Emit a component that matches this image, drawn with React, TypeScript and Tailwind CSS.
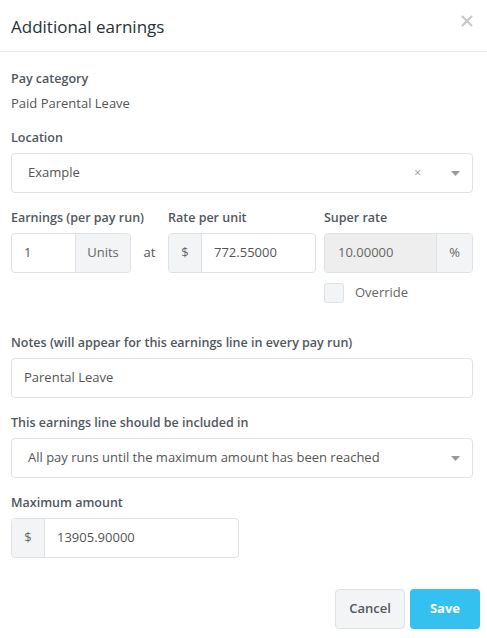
import { X } from "lucide-react";

const font = { fontFamily: '"Open Sans", "Liberation Sans", sans-serif' };

const Caret = () => (
  <svg width="9" height="5" viewBox="0 0 9 5" className="text-[#999]">
    <path d="M0 0h9L4.5 5z" fill="currentColor" />
  </svg>
);

const Label = ({ children }: { children: React.ReactNode }) => (
  <div className="text-[12.5px] font-semibold text-[#51575e] leading-[18px] mb-[6px] whitespace-nowrap">{children}</div>
);

export default function App() {
  return (
    <div className="w-[487px] h-[638px] bg-white text-[#555]" style={font}>
      {/* header */}
      <div className="flex items-center justify-between h-[52px] pl-[11px] pr-[11px] border-b border-[#e5eaee]">
        <h2 className="text-[17px] text-[#263238] leading-none pt-[2px]">Additional earnings</h2>
        <X className="w-[18px] h-[18px] text-[#c8c8c8] -mt-[9px]" strokeWidth={2.75} />
      </div>

      <div className="px-[11px] pt-[18px] w-[484px]">
        <Label>Pay category</Label>
        <div className="text-[13px] leading-[18px] text-[#555] -mt-[0px]">Paid Parental Leave</div>

        <div className="mt-[17px]">
          <Label>Location</Label>
          <div className="h-[40px] border border-[#dde2e6] rounded-[4px] flex items-center pl-[16px] pr-[12px] text-[13px]">
            <span className="flex-1">Example</span>
            <span className="text-[#999] text-[12px] mr-[30px]">×</span>
            <Caret />
          </div>
        </div>

        {/* earnings row */}
        <div className="mt-[16px] flex">
          <div className="w-[157px] shrink-0">
            <Label>Earnings (per pay run)</Label>
            <div className="flex items-center">
              <div className="flex h-[40px] w-[120px] border border-[#dde2e6] rounded-[4px] overflow-hidden text-[13px]">
                <div className="w-[63px] flex items-center pl-[12px] text-[#555]">1</div>
                <div className="flex-1 flex items-center justify-center bg-[#f3f4f6] border-l border-[#dde2e6] text-[#666]">Units</div>
              </div>
              <div className="flex-1 h-[40px] flex items-center justify-center text-[13px] text-[#555]">at</div>
            </div>
          </div>
          <div className="w-[148px] shrink-0">
            <Label>Rate per unit</Label>
            <div className="flex h-[40px] border border-[#dde2e6] rounded-[4px] overflow-hidden text-[13px]">
              <div className="w-[33px] flex items-center justify-center bg-[#f3f4f6] border-r border-[#dde2e6] text-[#666]">$</div>
              <div className="flex-1 flex items-center pl-[12px] text-[#555]">772.55000</div>
            </div>
          </div>
          <div className="w-[149px] shrink-0 ml-[8px]">
            <Label>Super rate</Label>
            <div className="flex h-[40px] border border-[#dde2e6] rounded-[4px] overflow-hidden text-[13px]">
              <div className="flex-1 flex items-center pl-[13px] bg-[#eeeeee] text-[#666]">10.00000</div>
              <div className="w-[36px] flex items-center justify-center bg-[#f3f4f6] border-l border-[#dde2e6] text-[#666]">%</div>
            </div>
            <div className="flex items-center mt-[10px] gap-[11px]">
              <div className="w-[20px] h-[20px] border border-[#dde2e6] rounded-[3px] bg-[#f3f4f6]" />
              <span className="text-[13px] text-[#666]">Override</span>
            </div>
          </div>
        </div>

        <div className="mt-[31px]">
          <Label>Notes (will appear for this earnings line in every pay run)</Label>
          <div className="h-[40px] border border-[#dde2e6] rounded-[4px] flex items-center pl-[12px] text-[13px]">Parental Leave</div>
        </div>

        <div className="mt-[16px]">
          <Label>This earnings line should be included in</Label>
          <div className="h-[40px] border border-[#dde2e6] rounded-[4px] flex items-center pl-[16px] pr-[12px] text-[13px]">
            <span className="flex-1">All pay runs until the maximum amount has been reached</span>
            <Caret />
          </div>
        </div>

        <div className="mt-[16px]">
          <Label>Maximum amount</Label>
          <div className="flex h-[40px] w-[228px] border border-[#dde2e6] rounded-[4px] overflow-hidden text-[13px]">
            <div className="w-[33px] flex items-center justify-center bg-[#f3f4f6] border-r border-[#dde2e6] text-[#666]">$</div>
            <div className="flex-1 flex items-center pl-[12px] text-[#555]">13905.90000</div>
          </div>
        </div>
      </div>

      {/* footer */}
      <div className="flex justify-end gap-[5px] pr-[7px] mt-[31px]">
        <button className="w-[70px] h-[40px] rounded-[4px] border border-[#dde2e6] bg-[#f3f4f6] text-[13px] font-semibold text-[#51575e]">Cancel</button>
        <button className="w-[70px] h-[40px] rounded-[4px] bg-[#35c1f0] text-[13px] font-bold text-white">Save</button>
      </div>
    </div>
  );
}
